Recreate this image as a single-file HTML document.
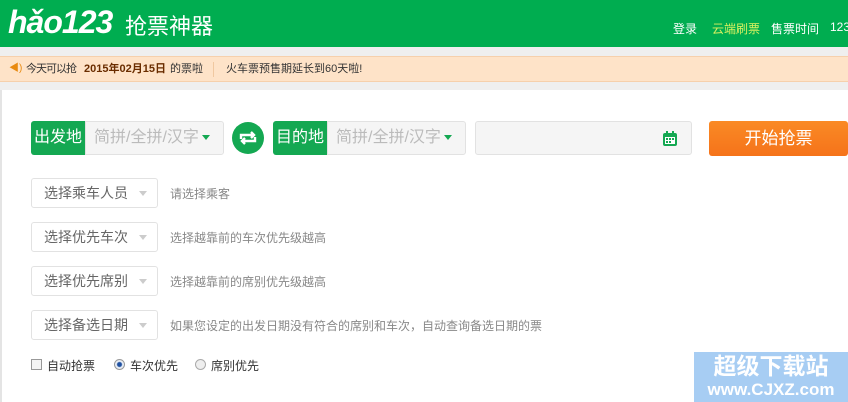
<!DOCTYPE html>
<html><head><meta charset="utf-8"><style>
*{margin:0;padding:0;box-sizing:border-box}
body{width:848px;height:402px;overflow:hidden;background:#efefef;font-family:"Liberation Sans","Noto Sans CJK SC",sans-serif;position:relative}
.hd{position:absolute;left:0;top:0;width:848px;height:47px;background:#00ad50}
.logo{position:absolute;left:8px;top:4px;color:#fff;font-size:32px;font-style:italic;letter-spacing:-1px;font-weight:bold}
.title{position:absolute;left:125px;top:9px;color:#fff;font-size:22px}
.nav{position:absolute;top:20px;font-size:12px;color:#fff}
.bar{position:absolute;left:0;top:56px;width:848px;height:26px;background:#fee3c8;border-top:1px solid #f6d0ac;border-bottom:1px solid #f6d0ac;font-size:11px;color:#333;line-height:24px}
.bar span{position:absolute;white-space:nowrap}
.main{position:absolute;left:0;top:90px;width:848px;height:312px;background:#fff;border-left:2px solid #e4e4e4}
.lbl{position:absolute;top:121px;height:34px;width:54px;background:#14a852;color:#fff;font-size:16px;line-height:34px;text-align:center;border-radius:3px 0 0 3px}
.inp{position:absolute;top:121px;height:34px;background:#f5f5f5;border:1px solid #e2e2e2;border-radius:0 3px 3px 0;color:#bbb;font-size:16px;line-height:32px;padding-left:8px}
.tri{display:inline-block;width:0;height:0;border-left:4px solid transparent;border-right:4px solid transparent;border-top:5px solid #14a852;vertical-align:middle;margin-left:3px}
.sel{position:absolute;left:31px;width:127px;height:30px;border:1px solid #e2e2e2;border-radius:3px;font-size:14px;color:#666;line-height:28px;padding-left:12px}
.sel i{position:absolute;right:10px;top:12px;border-left:4px solid transparent;border-right:4px solid transparent;border-top:5px solid #ccc}
.hint{position:absolute;left:170px;font-size:12px;color:#888}
</style></head><body>
<div class="hd">
<div class="logo">hǎo123</div>
<div class="title">抢票神器</div>
<span class="nav" style="left:673px">登录</span>
<span class="nav" style="left:712px;color:#d8f060">云端刷票</span>
<span class="nav" style="left:771px">售票时间</span>
<span class="nav" style="left:830px">123</span>
</div>
<div class="bar"><span style="left:9px;color:#e88a10;font-size:10px">◀)</span><span style="left:26px;letter-spacing:-1px">今天可以抢</span><b style="position:absolute;left:84px;color:#6a2d00;font-size:11px">2015年02月15日</b><span style="left:170px">的票啦</span><span style="left:213px;top:5px;width:1px;height:15px;background:#f0c8a0"></span><span style="left:226px">火车票预售期延长到60天啦!</span></div>
<div class="main"></div>
<div class="lbl" style="left:31px">出发地</div>
<div class="inp" style="left:85px;width:139px">简拼/全拼/汉字<span class="tri"></span></div>
<div style="position:absolute;left:232px;top:122px;width:32px;height:32px;border-radius:50%;background:#14a852">
<svg width="32" height="32" viewBox="0 0 32 32" fill="none" stroke="#fff" stroke-width="2.4"><path d="M9 17v-4h13M19 10l3 3-3 3M23 15v4H10M13 22l-3-3 3-3"/></svg></div>
<div class="lbl" style="left:273px">目的地</div>
<div class="inp" style="left:327px;width:139px">简拼/全拼/汉字<span class="tri"></span></div>
<div class="inp" style="left:475px;width:217px;border-radius:3px"></div>
<svg style="position:absolute;left:662px;top:130px" width="16" height="17" viewBox="0 0 16 17"><rect x="1" y="3" width="14" height="13" rx="2" fill="#14a852"/><rect x="4" y="1" width="2" height="4" fill="#14a852"/><rect x="10" y="1" width="2" height="4" fill="#14a852"/><rect x="3" y="7" width="10" height="7" fill="#fff"/><g fill="#14a852"><rect x="4" y="8" width="2" height="2"/><rect x="7" y="8" width="2" height="2"/><rect x="10" y="8" width="2" height="2"/><rect x="4" y="11" width="2" height="2"/><rect x="7" y="11" width="2" height="2"/></g></svg>
<div style="position:absolute;left:709px;top:121px;width:139px;height:35px;background:linear-gradient(#fa8a25,#f5731a);border-radius:3px;color:#fff;font-size:17px;line-height:35px;text-align:center">开始抢票</div>
<div class="sel" style="top:178px">选择乘车人员<i></i></div><span class="hint" style="top:185px">请选择乘客</span>
<div class="sel" style="top:222px">选择优先车次<i></i></div><span class="hint" style="top:229px">选择越靠前的车次优先级越高</span>
<div class="sel" style="top:266px">选择优先席别<i></i></div><span class="hint" style="top:273px">选择越靠前的席别优先级越高</span>
<div class="sel" style="top:310px">选择备选日期<i></i></div><span class="hint" style="top:317px">如果您设定的出发日期没有符合的席别和车次，自动查询备选日期的票</span>
<div style="position:absolute;left:31px;top:359px;width:11px;height:11px;border:1px solid #999;background:#f4f4f4"></div>
<span style="position:absolute;left:47px;top:357px;font-size:12px;color:#333">自动抢票</span>
<div style="position:absolute;left:114px;top:359px;width:11px;height:11px;border-radius:50%;border:1px solid #999;background:radial-gradient(#2050a0 2px,#e8eef6 3px)"></div>
<span style="position:absolute;left:130px;top:357px;font-size:12px;color:#333">车次优先</span>
<div style="position:absolute;left:195px;top:359px;width:11px;height:11px;border-radius:50%;border:1px solid #aaa;background:#eee"></div>
<span style="position:absolute;left:211px;top:357px;font-size:12px;color:#333">席别优先</span>
<div style="position:absolute;left:694px;top:352px;width:154px;height:50px;background:#a7cdf3;color:#fff;text-align:center;font-weight:bold">
<div style="font-size:23px;line-height:28px">超级下载站</div><div style="font-size:17px;line-height:20px">www.CJXZ.com</div></div>
</body></html>
